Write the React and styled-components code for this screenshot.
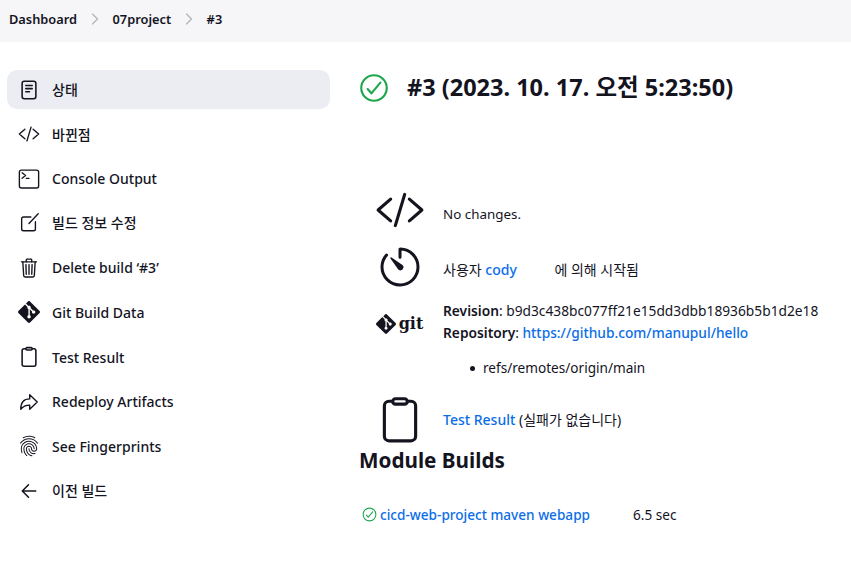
import React from 'react';
import styled, { createGlobalStyle } from 'styled-components';
import {
  IoChevronForward,
  IoCodeSlashOutline,
  IoTerminalOutline,
  IoTrashOutline,
  IoArrowRedoOutline,
  IoFingerPrintOutline,
  IoArrowBackOutline,
  IoTimerOutline,
  IoCheckmarkCircleOutline,
} from 'react-icons/io5';
import { SiGit } from 'react-icons/si';

const GlobalStyle = createGlobalStyle`
  html, body {
    margin: 0;
    background: #fff;
    color: #14141f;
    font-family: "Noto Sans", "Noto Sans CJK KR", sans-serif;
    font-size: 14px;
  }
  a {
    color: #0b6ee8;
    text-decoration: none;
    font-weight: 500;
  }
`;

const Page = styled.div`
  width: 851px;
  height: 563px;
  overflow: hidden;
`;

const Breadcrumbs = styled.nav`
  height: 42px;
  background: #f6f6f8;
  display: flex;
  align-items: center;
  padding-left: 9px;
  font-size: 12.8px;
  font-weight: 600;
  padding-bottom: 4px;
  box-sizing: border-box;
`;

const Chevron = styled(IoChevronForward)`
  width: 18px;
  height: 18px;
  color: #b4b4bc;
  margin: 0 9px 0 8.5px;
  path {
    stroke-width: 36;
  }
`;

const Body = styled.div`
  display: flex;
`;

const Sidebar = styled.aside`
  width: 323px;
  margin: 28px 0 0 7px;
  display: flex;
  flex-direction: column;
  gap: 5.6px;
`;

const TaskLink = styled.div`
  height: 39px;
  display: flex;
  align-items: center;
  border-radius: 10px;
  padding-left: 11px;
  background: ${(p) => (p.$active ? '#ecedf3' : 'transparent')};
  font-weight: 550;
  font-size: 14px;
`;

const TaskLabel = styled.span`
  padding-bottom: ${(p) => (p.$ko ? '2px' : '0')};
`;

const TaskIcon = styled.span`
  width: 22px;
  height: 22px;
  margin-right: 12px;
  display: flex;
  align-items: center;
  justify-content: center;
  svg {
    width: 22px;
    height: 22px;
    display: block;
  }
`;

const BackArrow = styled(IoArrowBackOutline)`
  path {
    stroke-width: 36;
  }
`;

const Main = styled.main`
  margin-left: 29px;
  flex: 1;
  font-size: 13.6px;
`;

const TitleRow = styled.div`
  display: flex;
  align-items: center;
  height: 34px;
  margin-top: 29px;
`;

const TitleIcon = styled(IoCheckmarkCircleOutline)`
  width: 34px;
  height: 34px;
  margin-left: -2px;
  margin-right: 16px;
  color: #1ea64d;
`;

const Title = styled.h1`
  margin: 0 0 2px;
  font-size: 23.5px;
  font-weight: 700;
  line-height: 32px;
`;

const Summary = styled.div`
  margin-top: 80px;
  display: grid;
  grid-template-columns: 81px 1fr;
  column-gap: 3px;
  align-items: center;
  row-gap: 8px;
`;

const SummaryIcon = styled.div`
  display: flex;
  align-items: center;
  justify-content: center;
  height: ${(p) => p.$h}px;
  padding-top: ${(p) => p.$top || 0}px;
  box-sizing: border-box;
  svg {
    display: block;
  }
`;

const BigCode = styled(IoCodeSlashOutline)`
  width: 50px;
  height: 50px;
`;

const BigTimer = styled(IoTimerOutline)`
  width: 48px;
  height: 48px;
`;

const GitMark = styled.div`
  display: flex;
  align-items: center;
  gap: 3px;
  svg {
    width: 20px;
    height: 20px;
  }
`;

const GitWord = styled.span`
  font-family: "DejaVu Serif", serif;
  font-weight: 700;
  font-size: 16px;
  line-height: 20px;
`;

const Line = styled.div`
  line-height: 22px;
  font-size: ${(p) => p.$size || 13.6}px;
  padding-top: ${(p) => p.$top || 0}px;
`;

const Details = styled.div`
  line-height: 22px;
  font-size: 13.75px;
`;

const Refs = styled.ul`
  margin: 4px 0 0;
  padding: 0 0 9px 27px;
  list-style: none;
  line-height: 22px;
  li {
    display: flex;
    align-items: center;
  }
  li::before {
    content: '';
    width: 5px;
    height: 5px;
    border-radius: 50%;
    background: #14141f;
    margin-right: 8px;
  }
`;

const Label = styled.b`
  font-weight: 600;
`;

const Gap = styled.span`
  display: inline-block;
  width: ${(p) => p.$w}px;
`;

const SubTitle = styled.h2`
  margin: 1px 0 0;
  font-size: 20.7px;
  font-weight: 700;
  line-height: 30px;
`;

const ModuleRow = styled.div`
  display: flex;
  align-items: center;
  margin-top: 28px;
  height: 22px;
  padding-left: 2px;
`;

const ModuleIcon = styled(IoCheckmarkCircleOutline)`
  width: 17px;
  height: 17px;
  color: #1ea64d;
  margin-right: 2px;
`;

const Duration = styled.span`
  margin-left: auto;
  width: 218px;
`;

const Notepad = () => (
  <svg viewBox="0 0 24 24" fill="none" stroke="currentColor" strokeWidth="1.7" strokeLinecap="round">
    <rect x="4.5" y="2.5" width="15" height="19" rx="2.4" />
    <path d="M8.5 7h7M8.5 10.5h7M8.5 14h4" />
  </svg>
);

const EditBox = () => (
  <svg viewBox="0 0 24 24" fill="none" stroke="currentColor" strokeWidth="1.5" strokeLinecap="round" strokeLinejoin="round">
    <path d="M14 5.5H6a2 2 0 0 0-2 2v11a2 2 0 0 0 2 2h11a2 2 0 0 0 2-2v-8" />
    <path d="M12 12.5 22 2" />
  </svg>
);

const Clipboard = ({ width = 22, height = 22, weight = 1.7 }) => (
  <svg width={width} height={height} viewBox="0 0 24 24" fill="none" stroke="currentColor" strokeWidth={weight} strokeLinejoin="round">
    <rect x="4.5" y="3" width="15" height="19" rx="2.2" />
    <rect x="8.5" y="1.8" width="7" height="2.6" rx="1.3" fill="#fff" />
  </svg>
);

const tasks = [
  { label: '상태', icon: <Notepad />, active: true, ko: true },
  { label: '바뀐점', icon: <IoCodeSlashOutline /> },
  { label: 'Console Output', icon: <IoTerminalOutline /> },
  { label: '빌드 정보 수정', icon: <EditBox />, ko: true },
  { label: 'Delete build ‘#3’', icon: <IoTrashOutline /> },
  { label: 'Git Build Data', icon: <SiGit /> },
  { label: 'Test Result', icon: <Clipboard /> },
  { label: 'Redeploy Artifacts', icon: <IoArrowRedoOutline /> },
  { label: 'See Fingerprints', icon: <IoFingerPrintOutline /> },
  { label: '이전 빌드', icon: <BackArrow />, ko: true },
];

export default function App() {
  return (
    <Page>
      <GlobalStyle />
      <Breadcrumbs>
        <span>Dashboard</span>
        <Chevron />
        <span>07project</span>
        <Chevron />
        <span>#3</span>
      </Breadcrumbs>
      <Body>
        <Sidebar>
          {tasks.map((t) => (
            <TaskLink key={t.label} $active={t.active}>
              <TaskIcon>{t.icon}</TaskIcon>
              <TaskLabel $ko={t.ko}>{t.label}</TaskLabel>
            </TaskLink>
          ))}
        </Sidebar>
        <Main>
          <TitleRow>
            <TitleIcon />
            <Title>#3 (2023. 10. 17. 오전 5:23:50)</Title>
          </TitleRow>
          <Summary>
            <SummaryIcon $h={50}><BigCode /></SummaryIcon>
            <Line $size={13.4} $top={8}>No changes.</Line>
            <SummaryIcon $h={48}><BigTimer /></SummaryIcon>
            <Line $size={14} $top={6}>
              사용자 <a href="#cody">cody</a>
              <Gap $w={34} /> 에 의해 시작됨
            </Line>
            <SummaryIcon $h={46} $top={4}>
              <GitMark>
                <SiGit />
                <GitWord>git</GitWord>
              </GitMark>
            </SummaryIcon>
            <Details>
              <div><Label>Revision</Label>: b9d3c438bc077ff21e15dd3dbb18936b5b1d2e18</div>
              <div><Label>Repository</Label>: <a href="#repo">https://github.com/manupul/hello</a></div>
            </Details>
            <div />
            <Refs>
              <li>refs/remotes/origin/main</li>
            </Refs>
            <SummaryIcon $h={48}><Clipboard width={50} height={50} weight={1.5} /></SummaryIcon>
            <Line $size={14}>
              <a href="#tests">Test Result</a> (실패가 없습니다)
            </Line>
          </Summary>
          <SubTitle>Module Builds</SubTitle>
          <ModuleRow>
            <ModuleIcon />
            <a href="#module">cicd-web-project maven webapp</a>
            <Duration>6.5 sec</Duration>
          </ModuleRow>
        </Main>
      </Body>
    </Page>
  );
}
